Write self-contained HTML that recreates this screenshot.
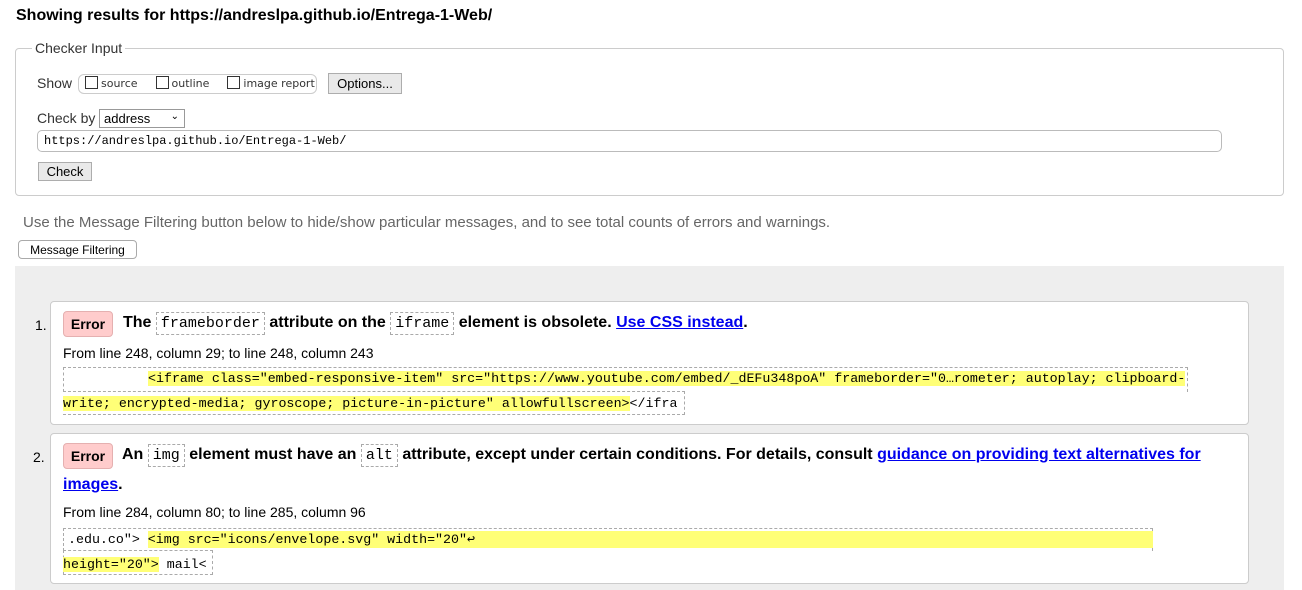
<!DOCTYPE html>
<html><head><meta charset="utf-8"><style>
*{box-sizing:border-box}
body{margin:0;width:1302px;height:590px;overflow:hidden;background:#fff;font-family:"Liberation Sans",Arial,sans-serif;color:#000;position:relative}
.a{position:absolute;white-space:nowrap}
.mono{font-family:"Liberation Mono","Courier New",monospace}
.btn{position:absolute;background:#e9e9e9;border:1px solid #adadad;font-size:13px;display:flex;align-items:center;justify-content:center}
.cb{display:inline-block;width:13px;height:13px;border:1px solid #333;vertical-align:-2px;margin-right:3px;background:#fff}
.item{position:absolute;left:50px;width:1199px;background:#fff;border:1px solid #ccc;border-radius:4px}
.err{position:absolute;background:#fcc;border:1px solid #e5b0b0;border-radius:4px;font-weight:bold;font-size:14px;display:flex;align-items:center;justify-content:center;width:50px;height:26px}
.t{font-weight:bold;font-size:16px}
.c{font-family:"Liberation Mono","Courier New",monospace;font-weight:normal;font-size:15px;border:1px dashed #aaa;padding:2px 4px}
.hl{background:#ff7}
a{color:#00e;text-decoration:underline}
.code{font-family:"Liberation Mono","Courier New",monospace;font-size:13.3px}
</style></head><body>
<div class="a" style="left:16px;top:7px;font-size:16px;font-weight:bold">Showing results for https://andreslpa.github.io/Entrega-1-Web/</div>
<div class="a" style="left:15px;top:48px;width:1269px;height:148px;border:1px solid #ccc;border-radius:4px"></div>
<div class="a" style="left:32px;top:40px;background:#fff;padding:0 3px;font-size:14px;color:#333">Checker Input</div>
<div class="a" style="left:37px;top:75px;font-size:14px;color:#333">Show</div>
<div class="a" style="left:78px;top:74px;width:239px;height:20px;border:1px solid #ccc;border-radius:6px;font-size:11px;padding:1px 0 0 6px;color:#333;font-family:'DejaVu Sans',sans-serif"><span class="cb"></span>source<span style="display:inline-block;width:18px"></span><span class="cb"></span>outline<span style="display:inline-block;width:18px"></span><span class="cb"></span>image report</div>
<div class="btn" style="left:328px;top:73px;width:74px;height:21px">Options...</div>
<div class="a" style="left:37px;top:110px;font-size:14px;color:#333">Check by</div>
<div class="a" style="left:99px;top:109px;width:86px;height:19px;border:1px solid #999;font-size:13px;padding:1px 4px">address<span style="position:absolute;right:5px;top:1px;font-size:10px">&#8964;</span></div>
<div class="a mono" style="left:37px;top:130px;width:1185px;height:22px;border:1px solid #bbb;border-radius:5px;font-size:12px;padding:3px 6px">https://andreslpa.github.io/Entrega-1-Web/</div>
<div class="btn" style="left:38px;top:162px;width:54px;height:19px">Check</div>
<div class="a" style="left:23px;top:214px;font-size:15px;color:#666">Use the Message Filtering button below to hide/show particular messages, and to see total counts of errors and warnings.</div>
<div class="btn" style="left:18px;top:240px;width:119px;height:19px;background:#fff;border-color:#aaa;border-radius:4px;font-size:12px">Message Filtering</div>
<div class="a" style="left:15px;top:266px;width:1269px;height:324px;background:#eee"></div>

<div class="item" style="top:301px;height:124px"></div>
<div class="a" style="left:35px;top:317px;font-size:14px">1.</div>
<div class="err" style="left:63px;top:311px">Error</div>
<div class="a t" style="left:123px;top:314px">The <span class="c">frameborder</span> attribute on the <span class="c">iframe</span> element is obsolete. <a>Use CSS instead</a>.</div>
<div class="a" style="left:63px;top:345px;font-size:14px">From line 248, column 29; to line 248, column 243</div>
<div class="a" style="left:63px;top:367px;width:1125px;height:25px;border:1px dashed #aaa;border-bottom:none"></div>
<div class="a" style="left:63px;top:391px;width:622px;height:24px;border-top:1px dashed #aaa;border-right:1px dashed #aaa;border-bottom:1px dashed #aaa"></div>
<div class="a" style="left:1187px;top:367px;width:1px;height:25px;border-left:1px dashed #aaa;display:none"></div>
<div class="a code" style="left:148px;top:370px;height:17px;line-height:17px"><span class="hl">&lt;iframe class="embed-responsive-item" src="https://www.youtube.com/embed/_dEFu348poA" frameborder="0…rometer; autoplay; clipboard-</span></div>
<div class="a code" style="left:63px;top:395px;height:17px;line-height:17px"><span class="hl">write; encrypted-media; gyroscope; picture-in-picture" allowfullscreen&gt;</span>&lt;/ifra</div>

<div class="item" style="top:433px;height:151px"></div>
<div class="a" style="left:33px;top:449px;font-size:14px">2.</div>
<div class="err" style="left:63px;top:443px">Error</div>
<div class="a t" style="left:122px;top:446px">An <span class="c">img</span> element must have an <span class="c">alt</span> attribute, except under certain conditions. For details, consult <a>guidance on providing text alternatives for</a></div>
<div class="a t" style="left:63px;top:476px"><a>images</a>.</div>
<div class="a" style="left:63px;top:504px;font-size:14px">From line 284, column 80; to line 285, column 96</div>
<div class="a" style="left:63px;top:528px;width:1090px;height:23px;border:1px dashed #aaa;border-bottom:none"></div>
<div class="a" style="left:63px;top:550px;width:150px;height:25px;border:1px dashed #aaa"></div>
<div class="a" style="left:148px;top:531px;width:1005px;height:17px;background:#ff7"></div>
<div class="a code" style="left:68px;top:531px;height:17px;line-height:17px">.edu.co"&gt; <span class="hl">&lt;img src="icons/envelope.svg" width="20"↩</span></div>
<div class="a code" style="left:63px;top:556px;height:17px;line-height:17px"><span class="hl">height="20"&gt;</span> mail&lt;</div>
</body></html>
